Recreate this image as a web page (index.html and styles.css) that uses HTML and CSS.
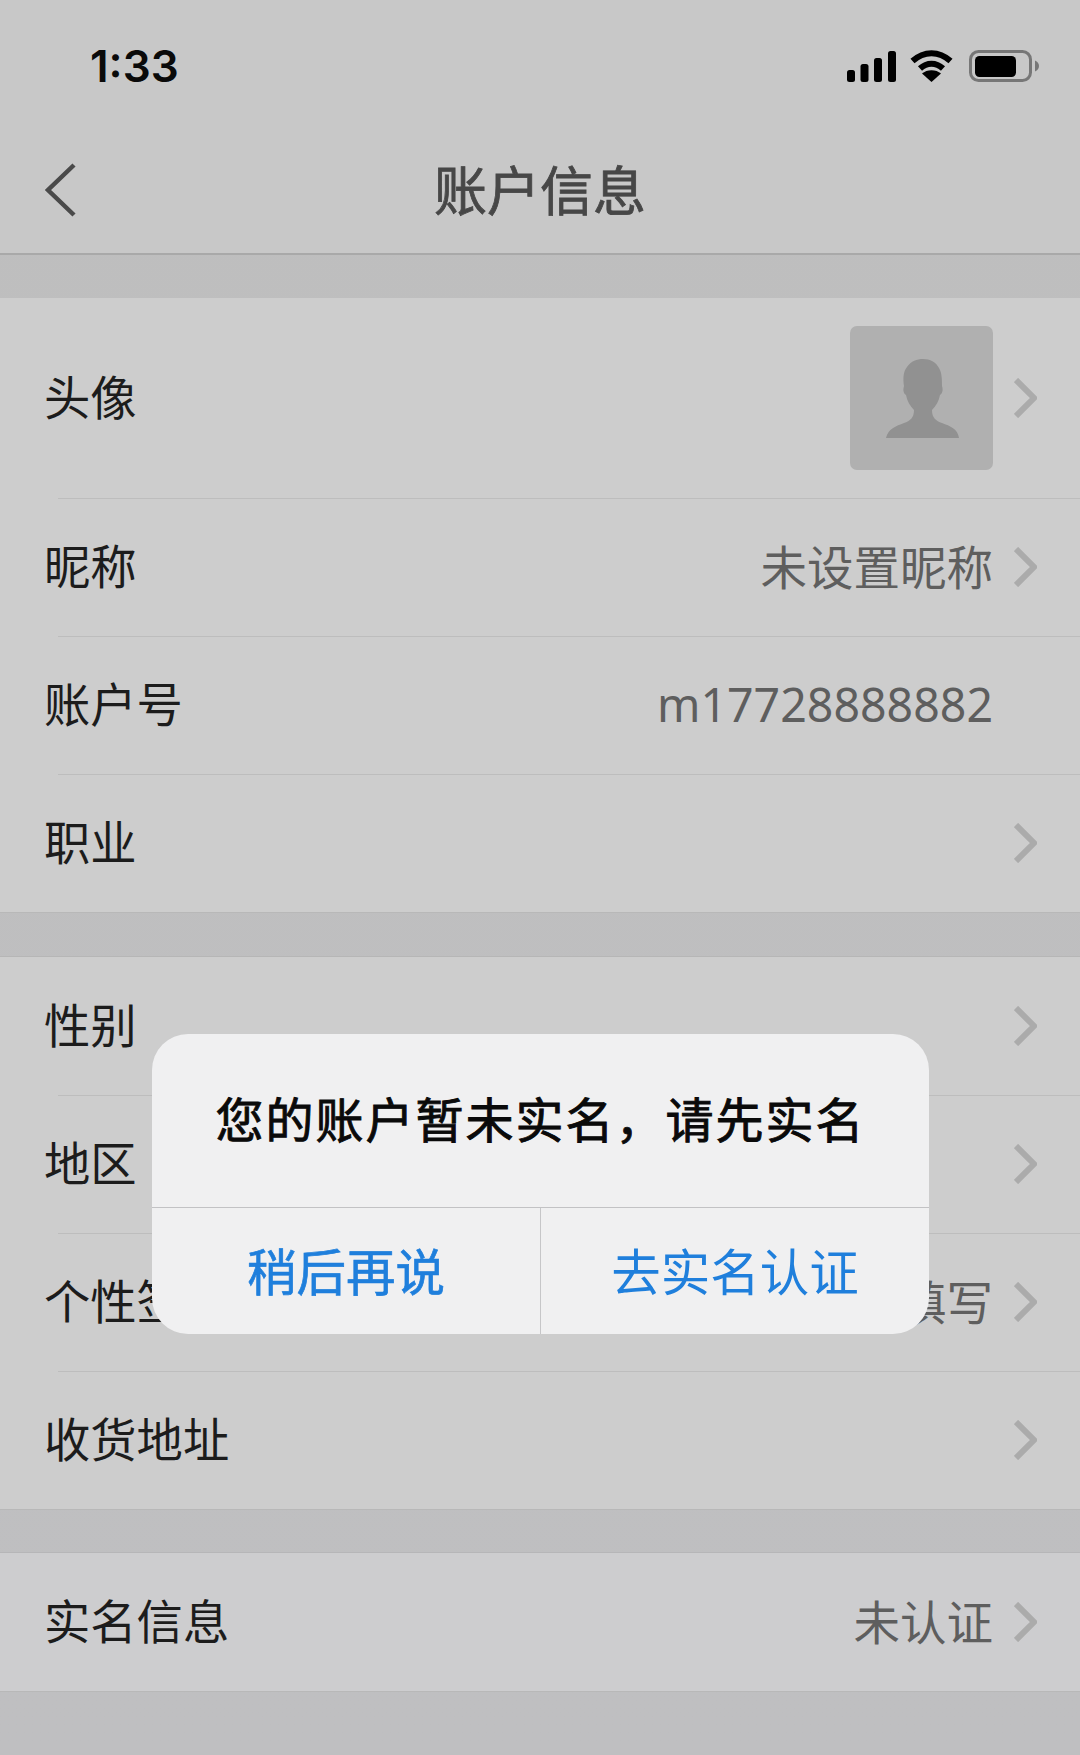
FILE: index.html
```
<!DOCTYPE html>
<html lang="zh-CN">
<head>
<meta charset="utf-8">
<title>账户信息</title>
<link rel="stylesheet" href="styles.css">
</head>
<body>
<div class="page">
  <header class="status">
    <span class="time">1:33</span>
    <div class="status-icons">
      <svg class="signal" width="49" height="31" viewBox="0 0 49 31"><rect x="0" y="19" width="8" height="12" rx="2.5"/><rect x="13.5" y="13" width="8" height="18" rx="2.5"/><rect x="27" y="7" width="8" height="24" rx="2.5"/><rect x="41" y="0" width="8" height="31" rx="2.5"/></svg>
      <svg class="wifi" width="43" height="32" viewBox="0 0 43 32"><path d="M2.500 11C14 .5 29 .5 40.500 11" fill="none" stroke="#000" stroke-width="6"/><path d="M10 18.500C17 12 26 12 33 18.500" fill="none" stroke="#000" stroke-width="6"/><path d="M21.500 32L12 23.500C17 19 26 19 31 23.500Z"/></svg>
      <svg class="battery" width="70" height="32" viewBox="0 0 70 32"><rect x="1.500" y="1.500" width="60" height="29" rx="8" fill="none" stroke="#777" stroke-width="3"/><rect x="6" y="6" width="41" height="21" rx="4.500"/><path d="M66 10.500C68.500 11.500 70 13.500 70 16C70 18.500 68.500 20.500 66 21.500Z" fill="#777"/></svg>
    </div>
  </header>
  <nav class="nav">
    <svg class="back" width="32" height="54" viewBox="0 0 32 54"><path d="M29 2L3 27L29 52" fill="none" stroke="#4a4a4a" stroke-width="4.500"/></svg>
    <h1 class="title">账户信息</h1>
  </nav>

  <section class="group group-a">
    <div class="row row-avatar">
      <span class="label">头像</span>
      <div class="avatar">
        <svg width="144" height="144" viewBox="0 0 144 144"><path d="M36 112C38 103 46 100 54 97C60 95 64 92 64 84C60 80 57 75 56 69C53 67 53 63 54 60C53 53 53 46 57 41C61 35 67 33 73 33C80 33 86 36 89 42C92 47 92 54 92 60C93 63 93 67 90 69C89 75 86 80 82 84C82 92 86 95 92 97C100 100 108 103 109 112Z" fill="#919191"/></svg>
      </div>
      <svg class="chev" width="23" height="40" viewBox="0 0 23 40"><path d="M2 2L20 20L2 38" fill="none" stroke="#ababab" stroke-width="6"/></svg>
    </div>
    <div class="row"><span class="label">昵称</span><span class="value">未设置昵称</span><svg class="chev" width="23" height="40" viewBox="0 0 23 40"><path d="M2 2L20 20L2 38" fill="none" stroke="#ababab" stroke-width="6"/></svg></div>
    <div class="row"><span class="label">账户号</span><span class="value value-latin">m17728888882</span><span class="chev-blank"></span></div>
    <div class="row"><span class="label">职业</span><svg class="chev chev-only" width="23" height="40" viewBox="0 0 23 40"><path d="M2 2L20 20L2 38" fill="none" stroke="#ababab" stroke-width="6"/></svg></div>
  </section>

  <section class="group group-b">
    <div class="row"><span class="label">性别</span><svg class="chev chev-only" width="23" height="40" viewBox="0 0 23 40"><path d="M2 2L20 20L2 38" fill="none" stroke="#ababab" stroke-width="6"/></svg></div>
    <div class="row"><span class="label">地区</span><svg class="chev chev-only" width="23" height="40" viewBox="0 0 23 40"><path d="M2 2L20 20L2 38" fill="none" stroke="#ababab" stroke-width="6"/></svg></div>
    <div class="row"><span class="label">个性签名</span><span class="value">未填写</span><svg class="chev" width="23" height="40" viewBox="0 0 23 40"><path d="M2 2L20 20L2 38" fill="none" stroke="#ababab" stroke-width="6"/></svg></div>
    <div class="row"><span class="label">收货地址</span><svg class="chev chev-only" width="23" height="40" viewBox="0 0 23 40"><path d="M2 2L20 20L2 38" fill="none" stroke="#ababab" stroke-width="6"/></svg></div>
  </section>

  <section class="group group-c">
    <div class="row"><span class="label">实名信息</span><span class="value">未认证</span><svg class="chev" width="23" height="40" viewBox="0 0 23 40"><path d="M2 2L20 20L2 38" fill="none" stroke="#ababab" stroke-width="6"/></svg></div>
  </section>

  <div class="dialog">
    <p class="message">您的账户暂未实名，请先实名</p>
    <div class="actions">
      <button class="action action-later">稍后再说</button>
      <button class="action">去实名认证</button>
    </div>
  </div>
</div>
</body>
</html>
```
FILE: styles.css
```
* {
  box-sizing: border-box;
}

html,
body {
  margin: 0;
  padding: 0;
}

body {
  font-family: "Noto Sans CJK SC", "Noto Sans", sans-serif;
  background: #bfbfc1;
}

.page {
  position: relative;
  width: 1080px;
  height: 1755px;
  overflow: hidden;
  background: linear-gradient(#bebebe, #bfbfc1);
}

.status {
  height: 130px;
  background: #c8c8c8;
  display: flex;
  align-items: flex-start;
  justify-content: space-between;
  padding: 50px 41px 0 90px;
}

.time {
  font-family: Inter, "Liberation Sans", sans-serif;
  font-size: 44px;
  font-weight: 600;
  line-height: 33px;
  color: #0a0a0a;
}

.status-icons {
  display: flex;
  align-items: flex-start;
}

.signal {
  margin: 1px 0 0 1px;
}

.wifi {
  margin-left: 14px;
}

.battery {
  margin-left: 16px;
}

.nav {
  height: 125px;
  background: #c8c8c8;
  border-bottom: 2px solid #a9a9a9;
  display: flex;
  align-items: center;
  justify-content: center;
  position: relative;
}

.back {
  position: absolute;
  left: 45px;
  top: 33px;
}

.title {
  margin: 0 0 7px;
  font-size: 53px;
  font-weight: 400;
  line-height: 62px;
  color: #474747;
  -webkit-text-stroke: 0.8px #474747;
}

.group {
  background-color: #cdcdcd;
  box-shadow: 0 1px 0 #b8b8b8;
}

.group-a {
  margin-top: 43px;
}

.group-b {
  margin-top: 44px;
  border-top: 1px solid #b6b6b6;
}

.group-c {
  margin-top: 43px;
  background-color: #cdcdcf;
  border-top: 1px solid #b6b6b8;
}

.row {
  height: 138px;
  display: flex;
  align-items: center;
  padding: 0 43px 0 44px;
}

.row + .row {
  background-image: linear-gradient(#bdbdbd, #bdbdbd);
  background-repeat: no-repeat;
  background-position: 58px 0;
  background-size: 100% 1px;
}

.row-avatar {
  height: 200px;
}

.label {
  margin-bottom: 7px;
  font-size: 46.3px;
  line-height: 60px;
  color: #1c1c1c;
}

.value {
  margin: 0 0 5px auto;
  font-size: 46.5px;
  line-height: 60px;
  color: #5e5e5e;
}

.value-latin {
  margin-bottom: 2px;
  font-family: "Noto Sans", sans-serif;
}

.avatar {
  margin-left: auto;
  width: 143px;
  height: 144px;
  border-radius: 7px;
  background: #b0b0b0;
}

.avatar svg {
  display: block;
}

.chev {
  margin-left: 21px;
  flex: none;
}

.chev-only {
  margin-left: auto;
}

.chev-blank {
  width: 23px;
  margin-left: 21px;
}

.dialog {
  position: absolute;
  left: 152px;
  top: 1034px;
  width: 777px;
  height: 300px;
  border-radius: 36px;
  background: #f0f0f1;
  display: flex;
  flex-direction: column;
  overflow: hidden;
}

.message {
  margin: 0;
  height: 173px;
  padding-bottom: 8px;
  display: flex;
  align-items: center;
  justify-content: center;
  font-size: 48px;
  letter-spacing: 2px;
  color: #0a0a0a;
  -webkit-text-stroke: 0.9px #0a0a0a;
}

.actions {
  flex: 1;
  display: flex;
  border-top: 1.5px solid #c2c2c4;
}

.action {
  flex: 1;
  border: 0;
  padding: 0 0 2px;
  background: none;
  font-family: inherit;
  font-size: 49.5px;
  line-height: 60px;
  color: #1f7fdc;
}

.action-later {
  border-right: 1px solid #c6c6c8;
  -webkit-text-stroke: 0.7px #1f7fdc;
}
```
